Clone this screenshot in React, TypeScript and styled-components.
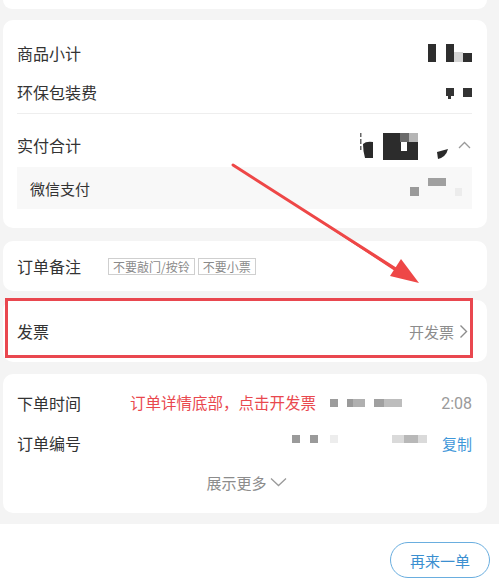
import React from "react";
import styled, { createGlobalStyle } from "styled-components";

const Global = createGlobalStyle`
  html, body { margin: 0; padding: 0; background: #fff; }
  body { font-family: "Noto Sans CJK SC", "Noto Sans", sans-serif; color: #333; }
  * { box-sizing: border-box; }
`;

const Screen = styled.div`
  position: relative;
  width: 499px;
  height: 587px;
  overflow: hidden;
  background: #fff;
`;

const Content = styled.div`
  display: flex;
  flex-direction: column;
  background: #f4f4f4;
  padding: 0 12px 11px 3px;
`;

const Card = styled.div<{ $mt?: number }>`
  position: relative;
  background: #fff;
  border-radius: 10px;
  margin-top: ${(p) => p.$mt ?? 0}px;
`;

const StubCard = styled(Card)`
  height: 9px;
  border-radius: 0 0 10px 10px;
`;

const SummaryCard = styled(Card)`
  padding: 14px 15px 19px 14px;
`;

const NoteCard = styled(Card)`
  height: 50px;
  padding: 0 15px 0 14px;
  display: flex;
  align-items: center;
`;

const InvoiceCard = styled(Card)`
  height: 62px;
  padding: 0 19px 0 14px;
  display: flex;
  align-items: center;
`;

const InfoCard = styled(Card)`
  padding: 9px 15px 12px 14px;
`;

const Row = styled.div<{ $h: number; $mt?: number }>`
  display: flex;
  align-items: center;
  height: ${(p) => p.$h}px;
  margin-top: ${(p) => p.$mt ?? 0}px;
`;

const Label = styled.span<{ $size?: number }>`
  font-size: ${(p) => p.$size ?? 16}px;
  line-height: 1;
  color: #333;
  white-space: nowrap;
`;

const Divider = styled.div`
  height: 1px;
  background: #eeeeee;
  margin-top: 1px;
`;

const SubBox = styled.div`
  margin-top: 3px;
  height: 42px;
  background: #f8f8f8;
  display: flex;
  align-items: center;
  padding: 0 8px 0 13px;
`;

const Right = styled.div`
  margin-left: auto;
  display: flex;
  align-items: center;
`;

const Tags = styled.div`
  display: flex;
  gap: 3px;
  margin-left: 27px;
`;

const Tag = styled.span`
  height: 17px;
  padding: 0 4px;
  border: 1px solid #cfcfcf;
  font-size: 12px;
  line-height: 15px;
  color: #8a8a8a;
  white-space: nowrap;
`;

const Muted = styled.span<{ $size?: number }>`
  font-size: ${(p) => p.$size ?? 15}px;
  line-height: 1;
  color: #8c8c8c;
  white-space: nowrap;
`;

const Annotation = styled.span`
  margin-left: 49px;
  font-size: 15.5px;
  line-height: 1;
  color: #e9484e;
  white-space: nowrap;
`;

const Time = styled.span`
  margin-left: auto;
  font-family: "Roboto", "Noto Sans", sans-serif;
  font-size: 16px;
  color: #9a9a9a;
`;

const CopyLink = styled.span`
  margin-left: auto;
  font-size: 15px;
  line-height: 1;
  color: #3f97d9;
`;

const MoreRow = styled.div`
  height: 38px;
  display: flex;
  align-items: center;
  justify-content: center;
  gap: 3px;
  padding-left: 4px;
`;

const HighlightFrame = styled.div`
  position: absolute;
  left: 2px;
  top: -2px;
  width: 468px;
  height: 60px;
  border: 3px solid #e9474f;
  pointer-events: none;
`;

const Footer = styled.div`
  height: 63px;
  display: flex;
  justify-content: flex-end;
  padding: 18px 9px 0 0;
  background: #fff;
`;

const ReorderButton = styled.button`
  width: 100px;
  height: 36px;
  border-radius: 18px;
  border: 1px solid #6aaedf;
  background: #fff;
  color: #3b8fd0;
  font-family: "Noto Sans CJK SC", sans-serif;
  font-size: 15px;
  padding: 0;
`;

const Overlay = styled.svg`
  position: absolute;
  left: 0;
  top: 0;
  pointer-events: none;
`;

const MosaicSvg = styled.svg<{ $ml?: number }>`
  display: block;
  flex-shrink: 0;
  margin-left: ${(p) => p.$ml ?? 0}px;
`;

type Cell = [number, number, number, number, string];

function Mosaic({ w, h, cells, ml, extra }: { w: number; h: number; cells: Cell[]; ml?: number; extra?: React.ReactNode }) {
  return (
    <MosaicSvg width={w} height={h} viewBox={`0 0 ${w} ${h}`} $ml={ml}>
      {cells.map(([x, y, cw, ch, c], i) => (
        <rect key={i} x={x} y={y} width={cw} height={ch} fill={c} />
      ))}
      {extra}
    </MosaicSvg>
  );
}

const ChevronUp = () => (
  <svg width="13" height="8" viewBox="0 0 13 8" style={{ marginLeft: 10, marginRight: 1 }}>
    <polyline points="1,7 6.5,1.5 12,7" fill="none" stroke="#9a9a9a" strokeWidth="1.3" />
  </svg>
);

const ChevronRight = () => (
  <svg width="9" height="15" viewBox="0 0 9 15" style={{ marginLeft: 5 }}>
    <polyline points="1.5,1.5 7.5,7.5 1.5,13.5" fill="none" stroke="#8c8c8c" strokeWidth="1.4" />
  </svg>
);

const ChevronDown = () => (
  <svg width="17" height="10" viewBox="0 0 17 10">
    <polyline points="1,1.5 8.5,8.5 16,1.5" fill="none" stroke="#9a9a9a" strokeWidth="1.3" />
  </svg>
);

export default function App() {
  return (
    <>
      <Global />
      <Screen>
        <Content>
          <StubCard />
          <SummaryCard $mt={11}>
            <Row $h={38}>
              <Label>商品小计</Label>
              <Right>
                <Mosaic
                  w={46}
                  h={20}
                  cells={[
                    [2, 1, 8, 18, "#2e2e2e"],
                    [20, 1, 8, 18, "#2e2e2e"],
                    [28, 9, 9, 10, "#d4d4d4"],
                    [37, 10, 9, 9, "#2e2e2e"],
                  ]}
                />
              </Right>
            </Row>
            <Row $h={40}>
              <Label>环保包装费</Label>
              <Right>
                <Mosaic
                  w={46}
                  h={20}
                  cells={[
                    [20, 6, 8, 8, "#333"],
                    [22, 14, 3, 3, "#333"],
                    [37, 6, 9, 9, "#333"],
                  ]}
                />
              </Right>
            </Row>
            <Divider />
            <Row $h={38} $mt={12}>
              <Label>实付合计</Label>
              <Right>
                <Mosaic
                  w={90}
                  h={32}
                  cells={[
                    [2, 4, 1.5, 4, "#666"],
                    [2, 10, 1.5, 5, "#666"],
                    [2, 17, 1.5, 4, "#666"],
                    [25, 4, 17, 27, "#2c2c2c"],
                    [42, 4, 9, 9, "#6a6a6a"],
                    [51, 4, 9, 9, "#b5b5b5"],
                    [42, 13, 18, 18, "#2c2c2c"],
                    [43, 13, 6, 9, "#ffffff"],
                  ]}
                  extra={
                    <>
                      <path d="M5,15 Q8,12 15,13 L15,29 L7,29 Q5,22 5,15 Z" fill="#2a2a2a" />
                      <path d="M79,23 L90,20 Q88,28 80,30 Z" fill="#2a2a2a" />
                    </>
                  }
                />
                <ChevronUp />
              </Right>
            </Row>
            <SubBox>
              <Label $size={15}>微信支付</Label>
              <Right>
                <Mosaic
                  w={56}
                  h={24}
                  cells={[
                    [2, 11, 9, 9, "#9a9a9a"],
                    [20, 2, 18, 8, "#a0a0a0"],
                    [47, 12, 7, 8, "#ececec"],
                  ]}
                />
              </Right>
            </SubBox>
          </SummaryCard>

          <NoteCard $mt={13}>
            <Label>订单备注</Label>
            <Tags>
              <Tag>不要敲门/按铃</Tag>
              <Tag>不要小票</Tag>
            </Tags>
          </NoteCard>

          <InvoiceCard $mt={9}>
            <Label>发票</Label>
            <Right>
              <Muted>开发票</Muted>
              <ChevronRight />
            </Right>
            <HighlightFrame />
          </InvoiceCard>

          <InfoCard $mt={12}>
            <Row $h={40}>
              <Label>下单时间</Label>
              <Annotation>订单详情底部，点击开发票</Annotation>
              <Mosaic
                w={76}
                h={12}
                ml={12}
                cells={[
                  [2, 2, 8, 8, "#9c9c9c"],
                  [19, 2, 6, 8, "#9a9a9a"],
                  [25, 2, 12, 8, "#b0b0b0"],
                  [46, 2, 10, 8, "#a0a0a0"],
                  [56, 2, 18, 8, "#bdbdbd"],
                ]}
              />
              <Time>2:08</Time>
            </Row>
            <Row $h={40}>
              <Label>订单编号</Label>
              <Mosaic
                w={140}
                h={16}
                ml={209}
                cells={[
                  [2, 0, 8, 8, "#9a9a9a"],
                  [20, 0, 8, 8, "#9a9a9a"],
                  [40, 0, 8, 8, "#ededed"],
                  [102, 0, 12, 8, "#dadada"],
                  [114, 0, 14, 8, "#b8b8b8"],
                  [128, 0, 9, 8, "#dadada"],
                ]}
              />
              <CopyLink>复制</CopyLink>
            </Row>
            <MoreRow>
              <Muted>展示更多</Muted>
              <ChevronDown />
            </MoreRow>
          </InfoCard>
        </Content>
        <Footer>
          <ReorderButton>再来一单</ReorderButton>
        </Footer>

        <Overlay width={499} height={587} viewBox="0 0 499 587">
          <polygon points="232.5,164 234,166 403,272.5 401,275" fill="#ee4747" />
          <line x1="233" y1="165" x2="402" y2="273" stroke="#ee4747" strokeWidth="3" strokeLinecap="round" />
          <polygon points="419,283 390,276 401,259" fill="#ee4747" />
        </Overlay>
      </Screen>
    </>
  );
}
